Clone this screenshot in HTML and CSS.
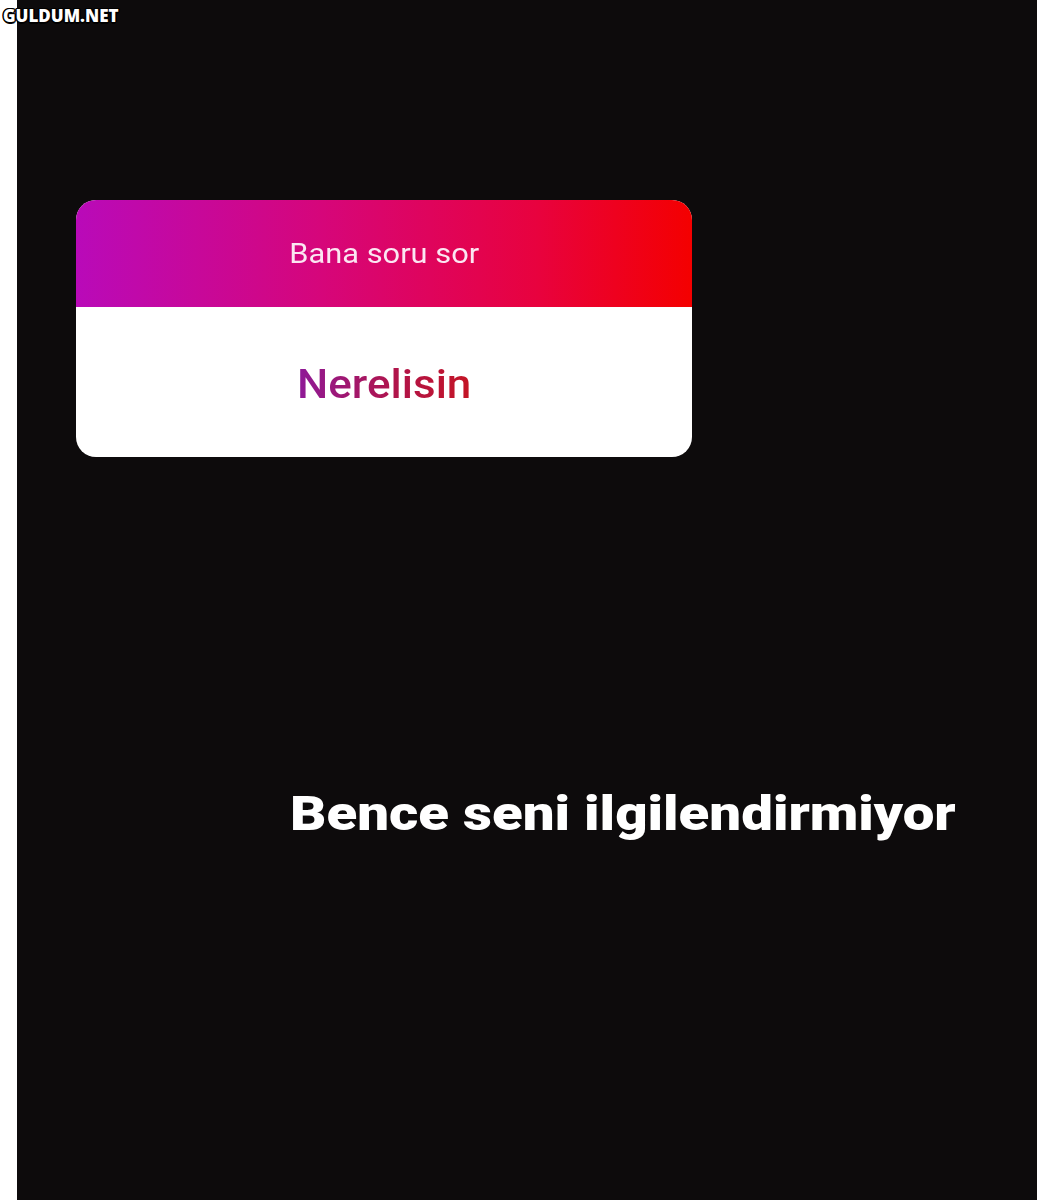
FILE: index.html
```html
<!DOCTYPE html>
<html lang="tr">
<head>
  <meta charset="UTF-8" />
  <title>Bana soru sor</title>
  <link rel="stylesheet" href="styles.css">
</head>
<body>
  <div class="watermark">GULDUM.NET</div>

  <main class="story">
    <div class="question-card">
      <div class="question-head"><span class="wide">Bana soru sor</span></div>
      <div class="question-body">
        <span class="question-text wide">Nerelisin</span>
      </div>
    </div>

    <p class="answer">Bence seni ilgilendirmiyor</p>
  </main>
</body>
</html>
```

FILE: styles.css
```css
body {
  margin: 0;
  padding: 0;
  background: #fff;
  font-family: Roboto, 'Noto Sans', sans-serif;
  overflow: hidden;
}

.watermark {
  position: absolute;
  top: 4px;
  left: 3px;
  font-family: 'Open Sans', sans-serif;
  font-weight: 800;
  font-size: 17px;
  color: #fff;
  text-shadow: 1.5px 0 0 #000, -1.5px 0 0 #000, 0 1.5px 0 #000, 0 -1.5px 0 #000,
    1px 1px 0 #000, -1px -1px 0 #000, 1px -1px 0 #000, -1px 1px 0 #000;
  z-index: 2;
}

.story {
  margin-left: 17px;
  width: 1020px;
  height: 1200px;
  background: #0d0b0c;
  padding: 200px 0 0 59px;
  box-sizing: border-box;
  overflow: hidden;
}

/* the story text is a little wider than stock Roboto */
.wide {
  display: inline-block;
  transform: scaleX(1.1);
}

.question-card {
  width: 616px;
  border-radius: 20px;
  overflow: hidden;
  background: #fff;
}

.question-head {
  height: 107px;
  display: flex;
  align-items: center;
  justify-content: center;
  background: linear-gradient(90deg, #b90ab9 0%, #d6067a 40%, #e8023e 75%, #f40000 100%);
  color: #fbe6f2;
  font-size: 28px;
}

.question-body {
  height: 150px;
  display: flex;
  align-items: center;
  justify-content: center;
}

.question-text {
  font-size: 40px;
  font-weight: 500;
  background: linear-gradient(90deg, #8e1a98, #b0144c 55%, #c41424);
  -webkit-background-clip: text;
  background-clip: text;
  color: transparent;
  margin-top: 4px;
}

.answer {
  width: fit-content;
  margin: 333px 0 0 214px;
  color: #fff;
  font-size: 48px;
  font-weight: 900;
  line-height: 1;
  transform: scaleX(1.175);
  transform-origin: left center;
}
```
